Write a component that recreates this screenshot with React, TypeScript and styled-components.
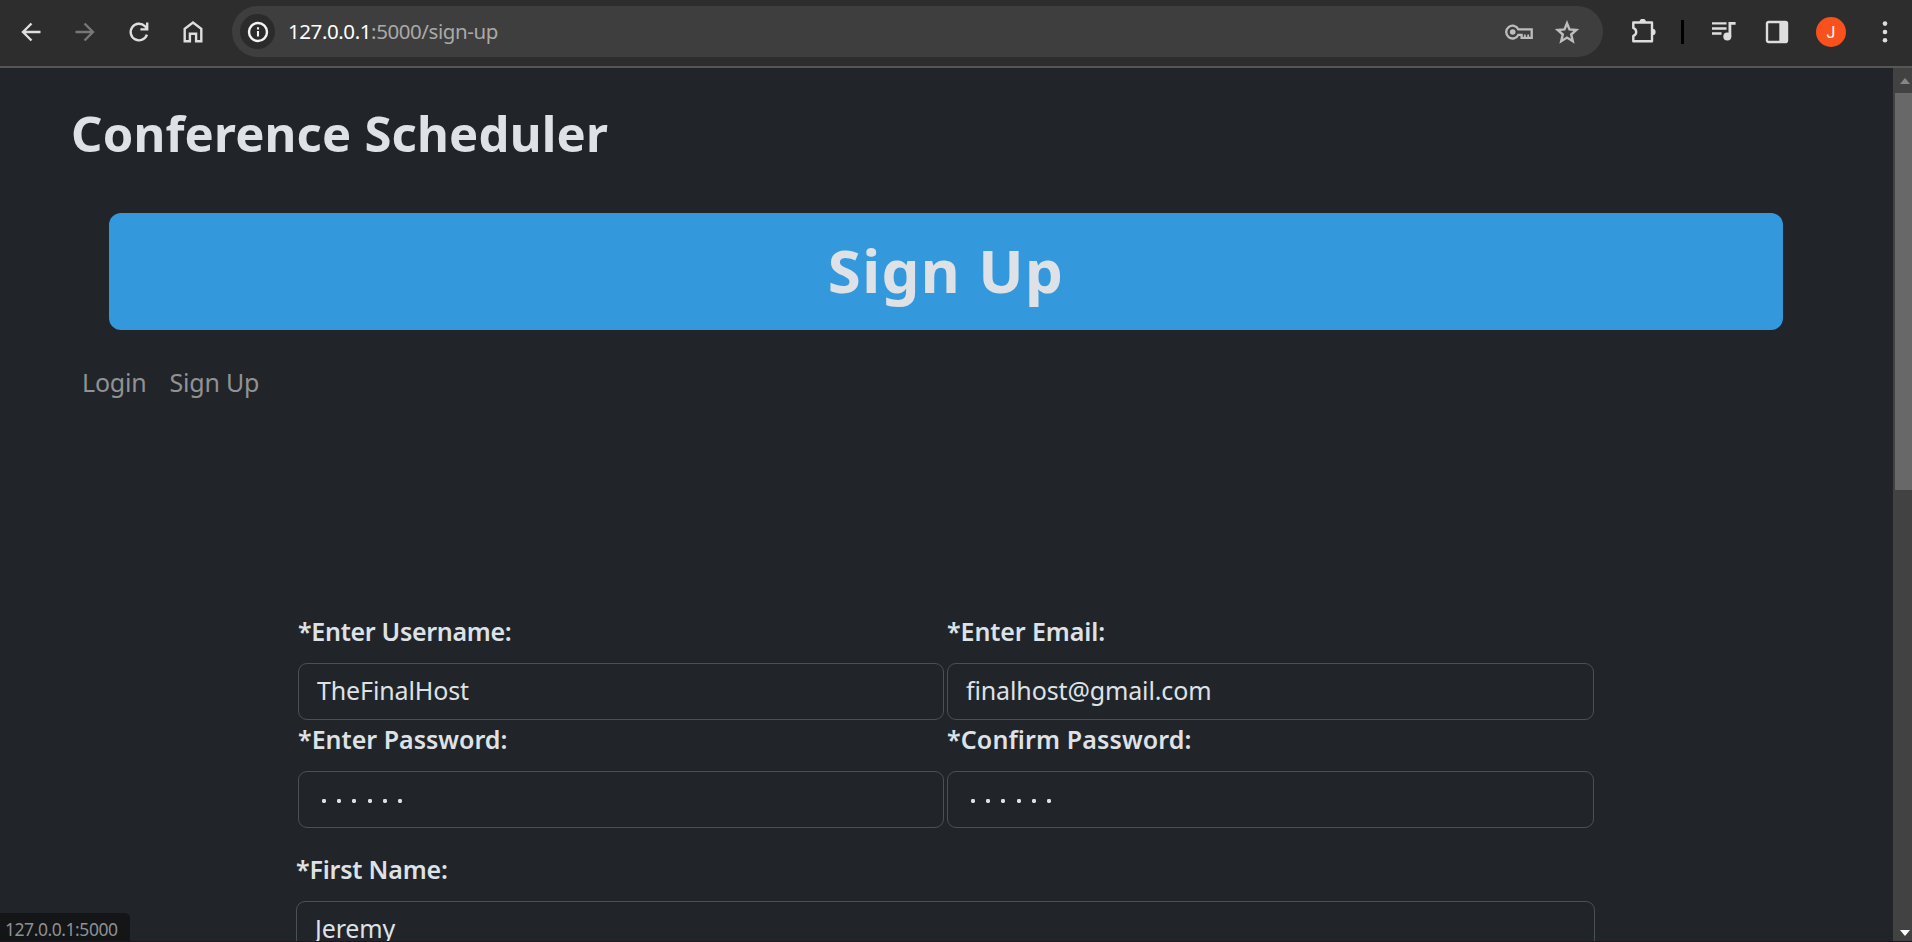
import React from "react";
import styled, { createGlobalStyle } from "styled-components";

const GlobalStyle = createGlobalStyle`
  * { box-sizing: border-box; }
  html, body { margin: 0; padding: 0; background: #212529; overflow: hidden; }
  body { font-family: "Noto Sans", "Open Sans", sans-serif; color: #dee2e6; }
`;

const Window = styled.div`
  display: flex;
  flex-direction: column;
  width: 1912px;
  height: 942px;
  overflow: hidden;
  position: relative;
  border-bottom: 1px solid #1c1620;
`;

const Toolbar = styled.header`
  display: flex;
  align-items: center;
  flex: none;
  height: 68px;
  padding: 0 17px 3px 18px;
  background: #2d2d2d;
  border-bottom: 2px solid #565656;
`;

const IconButton = styled.span<{ $width?: number; $gap?: number; $color?: string }>`
  display: flex;
  justify-content: center;
  flex: none;
  width: ${(p) => p.$width ?? 26}px;
  margin-left: ${(p) => p.$gap ?? 0}px;
  color: ${(p) => p.$color ?? "#dedede"};
  svg { display: block; }
`;

const AddressBar = styled.div`
  display: flex;
  align-items: center;
  flex: none;
  width: 1371px;
  height: 51px;
  margin-left: 26px;
  padding: 0 23px 0 8px;
  border-radius: 26px;
  background: #3e3e3e;
`;

const SiteInfo = styled.span`
  display: flex;
  align-items: center;
  justify-content: center;
  width: 35px;
  height: 35px;
  border-radius: 50%;
  background: #2b2b2b;
  color: #f4f4f4;
`;

const Url = styled.span`
  flex: 1;
  margin-left: 13px;
  padding-bottom: 1px;
  font-size: 20.5px;
  line-height: 28px;
  letter-spacing: -0.42px;
  color: #a9a9a9;
`;

const Host = styled.span`
  color: #ffffff;
`;

const Divider = styled.span`
  flex: none;
  width: 3px;
  height: 24px;
  margin-left: 24px;
  background: #000;
`;

const Avatar = styled.span`
  display: flex;
  align-items: center;
  justify-content: center;
  flex: none;
  width: 30px;
  height: 30px;
  margin-left: 27px;
  padding-top: 2px;
  border-radius: 50%;
  background: #f8511e;
  color: #fff;
  font: 16px Roboto, sans-serif;
`;

const Viewport = styled.div`
  display: flex;
  flex: 1;
  min-height: 0;
`;

const Page = styled.main`
  flex: 1;
  min-width: 0;
  padding: 35px 109px 0 65px;
  overflow: hidden;
`;

const SiteTitle = styled.h1`
  margin: 0;
  padding-left: 6px;
  font-size: 49px;
  line-height: 60px;
  font-weight: 700;
  letter-spacing: 0.18px;
`;

const Banner = styled.h2`
  height: 117px;
  margin: 50px 0 0 44px;
  width: 1674px;
  border-radius: 12px;
  background: #3399dc;
  font-size: 60px;
  line-height: 114px;
  font-weight: 700;
  letter-spacing: 1.4px;
  text-align: center;
`;

const Nav = styled.nav`
  display: flex;
  gap: 23px;
  margin-top: 33px;
  padding-left: 17px;
`;

const NavLink = styled.a`
  font-size: 25px;
  line-height: 38px;
  letter-spacing: -0.2px;
  color: #909294;
`;

const Form = styled.form`
  width: 1299px;
  margin: 211px 0 0 231px;
`;

const FieldGrid = styled.div`
  display: grid;
  grid-template-columns: 646px 647px;
  column-gap: 3px;
  padding-left: 2px;
  margin-bottom: 22px;
`;

const Label = styled.label<{ $tracking: number }>`
  display: block;
  margin-bottom: 13px;
  font-size: 25px;
  line-height: 38px;
  font-weight: 600;
  letter-spacing: ${(p) => p.$tracking}px;
`;

const Input = styled.div`
  height: 57px;
  padding: 0 17px 0 18px;
  border: 1px solid #495057;
  border-radius: 9px;
  font-size: 25px;
  line-height: 52px;
  letter-spacing: -0.13px;
`;

const Dots = styled.span`
  display: flex;
  align-items: center;
  gap: 11.2px;
  height: 55px;
  padding: 3px 0 0 5px;
`;

const Dot = styled.i`
  width: 4px;
  height: 4px;
  border-radius: 1.4px;
  background: #dee2e6;
`;

const Scrollbar = styled.aside`
  display: flex;
  flex-direction: column;
  flex: none;
  width: 19px;
  padding-left: 2px;
  background: #424242;
`;

const ArrowCell = styled.span<{ $height: number }>`
  display: flex;
  align-items: center;
  justify-content: center;
  height: ${(p) => p.$height}px;
  padding: 0 0 0 3px;
`;

const Thumb = styled.span`
  height: 397px;
  margin-bottom: auto;
  background: #686868;
`;

const StatusBubble = styled.div`
  position: absolute;
  left: 0;
  bottom: 0;
  width: 130px;
  height: 28px;
  padding-left: 5px;
  border-top-right-radius: 5px;
  background: #141517;
  color: #8d9095;
  font-size: 17.5px;
  line-height: 33px;
  letter-spacing: -0.45px;
`;

const stroke = { fill: "none", stroke: "currentColor", strokeWidth: 2.4 };

const BackIcon = () => (
  <svg width="26" height="26" viewBox="0 0 26 26" {...stroke}>
    <path d="M22.5 13H6M13.5 4.5 5 13l8.5 8.5" />
  </svg>
);

const ForwardIcon = () => (
  <svg width="26" height="26" viewBox="0 0 26 26" {...stroke}>
    <path d="M3.5 13H20M12.5 4.5 21 13l-8.5 8.5" />
  </svg>
);

const ReloadIcon = () => (
  <svg width="26" height="26" viewBox="0 0 26 26" {...stroke}>
    <path d="M20.9 15.6A8.3 8.3 0 1 1 18.9 7.2L20.8 9.2M21.2 3.6v6.8h-6.8" />
  </svg>
);

const HomeIcon = () => (
  <svg width="26" height="26" viewBox="0 0 26 26" {...stroke}>
    <path d="M4.7 22.3V9.9L13 3.6l8.3 6.3v12.4h-5.2v-7.6H9.9v7.6z" />
  </svg>
);

const InfoIcon = () => (
  <svg width="22" height="22" viewBox="0 0 22 22" {...stroke}>
    <circle cx="11" cy="11" r="9" />
    <path d="M11 10v5.5M11 6.2v2.3" strokeWidth="2.1" />
  </svg>
);

const KeyIcon = () => (
  <svg width="28" height="18" viewBox="0 0 28 18" fill="none" stroke="currentColor" strokeWidth="2.3">
    <path d="M13.4 6.4A6.4 6.4 0 1 0 13.4 11.8H16.6V14.9H26.7V6.4z" />
    <circle cx="7.7" cy="9" r="2.8" fill="currentColor" stroke="none" />
    <path d="M19.8 15v-3.4M23.2 15v-3.4" strokeWidth="1.8" />
  </svg>
);

const StarIcon = () => (
  <svg width="26" height="26" viewBox="0 0 26 26" fill="none" stroke="currentColor" strokeWidth="2.4">
    <path d="M13 4.2l2.5 6.2 6.8.6-5.1 4.5 1.6 6.7L13 18.6l-5.8 3.6 1.6-6.7L3.7 11l6.8-.6z" />
  </svg>
);

const PuzzleIcon = () => (
  <svg width="26" height="26" viewBox="0 0 26 26" fill="none" stroke="currentColor" strokeWidth="2.4" strokeLinejoin="round">
    <path d="M2.3 3.5H21v18.8H2.3v-5.4q2.9-1.2 2.9-4t-2.9-4z" />
    <path d="M8.5 3a3.2 3.2 0 0 1 6.4 0zM21.4 9.8a3.2 3.2 0 0 1 0 6.4z" fill="currentColor" stroke="none" />
  </svg>
);

const PlaylistIcon = () => (
  <svg width="26" height="22" viewBox="0 0 26 22" {...stroke}>
    <path d="M1 2.4h14.5M1 7.5h14.5M1 12.5h9.5" />
    <path d="M18.9 15.5V2.4h5.7" strokeWidth="2.8" />
    <circle cx="16.3" cy="15.4" r="4" fill="currentColor" stroke="none" />
  </svg>
);

const SidePanelIcon = () => (
  <svg width="24" height="24" viewBox="0 0 24 24" {...stroke}>
    <rect x="2" y="2" width="20" height="20" rx="1.6" />
    <path d="M14.3 2h7.7v20h-7.7z" fill="currentColor" stroke="none" />
  </svg>
);

const MenuIcon = () => (
  <svg width="6" height="24" viewBox="0 0 6 24" fill="currentColor">
    <circle cx="3" cy="3.6" r="2.3" />
    <circle cx="3" cy="12" r="2.3" />
    <circle cx="3" cy="20.3" r="2.3" />
  </svg>
);

const ScrollArrow = ({ down = false }: { down?: boolean }) => (
  <svg width="10" height="6" viewBox="0 0 10 6" fill={down ? "#fff" : "#868686"}>
    <path d={down ? "M0 0h10L5 6z" : "M5 0l5 6H0z"} />
  </svg>
);

const PasswordDots = ({ count }: { count: number }) => (
  <Dots>
    {Array.from({ length: count }, (_, i) => (
      <Dot key={i} />
    ))}
  </Dots>
);

interface FieldProps {
  label: string;
  tracking?: number;
  children: React.ReactNode;
}

const Field = ({ label, tracking = 0, children }: FieldProps) => (
  <div>
    <Label $tracking={tracking}>{label}</Label>
    <Input>{children}</Input>
  </div>
);

export default function App() {
  return (
    <>
      <GlobalStyle />
      <Window>
        <Toolbar>
          <IconButton><BackIcon /></IconButton>
          <IconButton $gap={28} $color="#777"><ForwardIcon /></IconButton>
          <IconButton $gap={28}><ReloadIcon /></IconButton>
          <IconButton $gap={28}><HomeIcon /></IconButton>
          <AddressBar>
            <SiteInfo><InfoIcon /></SiteInfo>
            <Url><Host>127.0.0.1</Host>:5000/sign-up</Url>
            <IconButton $width={28} $color="#bdbdbd"><KeyIcon /></IconButton>
            <IconButton $gap={21} $color="#bdbdbd"><StarIcon /></IconButton>
          </AddressBar>
          <IconButton $gap={28}><PuzzleIcon /></IconButton>
          <Divider />
          <IconButton $gap={27}><PlaylistIcon /></IconButton>
          <IconButton $gap={28} $width={24}><SidePanelIcon /></IconButton>
          <Avatar>J</Avatar>
          <IconButton $gap={36} $width={6}><MenuIcon /></IconButton>
        </Toolbar>
        <Viewport>
          <Page>
            <SiteTitle>Conference Scheduler</SiteTitle>
            <Banner>Sign Up</Banner>
            <Nav>
              <NavLink>Login</NavLink>
              <NavLink>Sign Up</NavLink>
            </Nav>
            <Form>
              <FieldGrid>
                <Field label="*Enter Username:" tracking={-0.3}>TheFinalHost</Field>
                <Field label="*Enter Email:" tracking={-0.1}>finalhost@gmail.com</Field>
                <Field label="*Enter Password:"><PasswordDots count={6} /></Field>
                <Field label="*Confirm Password:" tracking={0.12}><PasswordDots count={6} /></Field>
              </FieldGrid>
              <Field label="*First Name:" tracking={-0.2}>Jeremy</Field>
            </Form>
          </Page>
          <Scrollbar>
            <ArrowCell $height={25}><ScrollArrow /></ArrowCell>
            <Thumb />
            <ArrowCell $height={16}><ScrollArrow down /></ArrowCell>
          </Scrollbar>
        </Viewport>
        <StatusBubble>127.0.0.1:5000</StatusBubble>
      </Window>
    </>
  );
}
